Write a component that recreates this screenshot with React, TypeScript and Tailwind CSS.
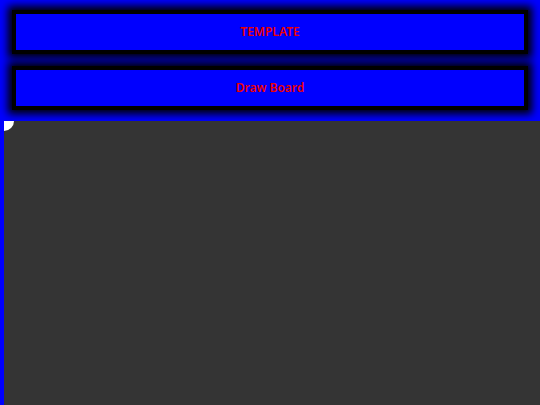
export default function App() {
  const buttons = ["TEMPLATE", "Draw Board"];
  return (
    <div className="w-[540px] h-[405px] bg-[#0000ff] flex flex-col overflow-hidden" style={{ fontFamily: '"Noto Sans", "Open Sans", sans-serif' }}>
      <div className="flex flex-col gap-[12px] px-[12px] pt-[10px] pb-[11px]">
        {buttons.map((b) => (
          <button
            key={b}
            className="h-[44px] w-full bg-[#0000ff] border-[4px] border-black shadow-[0_0_8px_4px_#000] text-[#ee0000] text-[12px] font-semibold"
          >
            {b}
          </button>
        ))}
      </div>
      <div className="flex-1 ml-[4px] bg-[#343434] relative">
        <div className="absolute left-0 top-0 w-[10px] h-[10px] bg-white rounded-br-full" />
      </div>
    </div>
  );
}
